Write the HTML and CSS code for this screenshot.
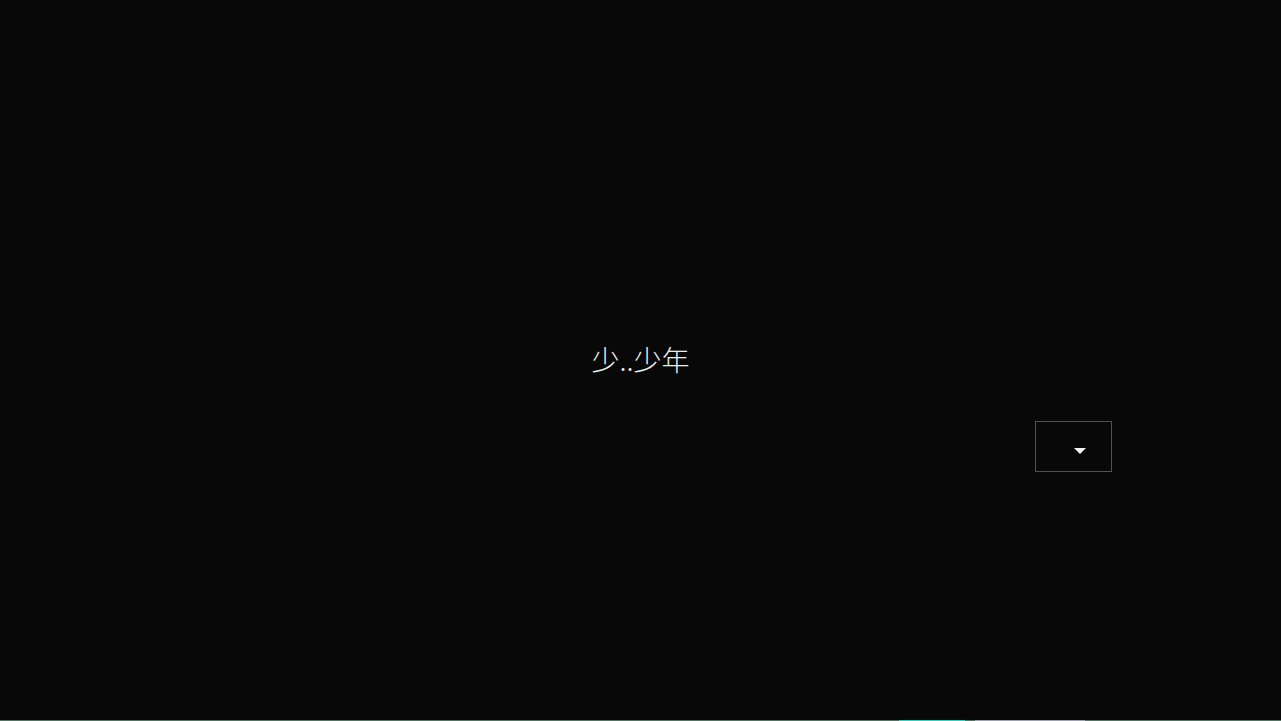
FILE: index.html
```html
<!DOCTYPE html>
<html lang="zh">
<head>
<meta charset="utf-8">
<title>少..少年</title>
<link rel="stylesheet" href="styles.css">
</head>
<body>
<div class="stage">
  <h1 class="title">少..少年</h1>
  <div class="dropdown"><span class="caret"></span></div>
</div>
<div class="strip">
  <span class="seg seg-a"></span>
  <span class="seg seg-b"></span>
</div>
</body>
</html>
```
FILE: styles.css
```css
html, body {
  margin: 0;
  padding: 0;
  background: #080808;
}
body {
  width: 1281px;
  height: 721px;
  overflow: hidden;
  display: flex;
  flex-direction: column;
  font-family: "Noto Sans CJK SC", "Noto Sans", sans-serif;
}
.stage {
  position: relative;
  flex: 1;
  display: flex;
  align-items: center;
  justify-content: center;
}
.title {
  margin: 0 0 2px 0;
  font-size: 28px;
  font-weight: 300;
  color: #ececec;
  letter-spacing: 0;
}
.dropdown {
  position: absolute;
  left: 1035px;
  top: 421px;
  width: 75px;
  height: 49px;
  border: 1px solid #e01414;
  display: flex;
  align-items: center;
  justify-content: center;
}
.caret {
  margin: 8px 0 0 12px;
  width: 0;
  height: 0;
  border-left: 6px solid transparent;
  border-right: 6px solid transparent;
  border-top: 6px solid #f2f2f2;
}
.strip {
  height: 1px;
  background: #4f7466;
  display: flex;
}
.seg { display: block; height: 1px; }
.seg-a { margin-left: 899px; width: 66px; background: #2bd4c0; }
.seg-b { margin-left: 10px; width: 110px; background: #9aa0b0; }
```
